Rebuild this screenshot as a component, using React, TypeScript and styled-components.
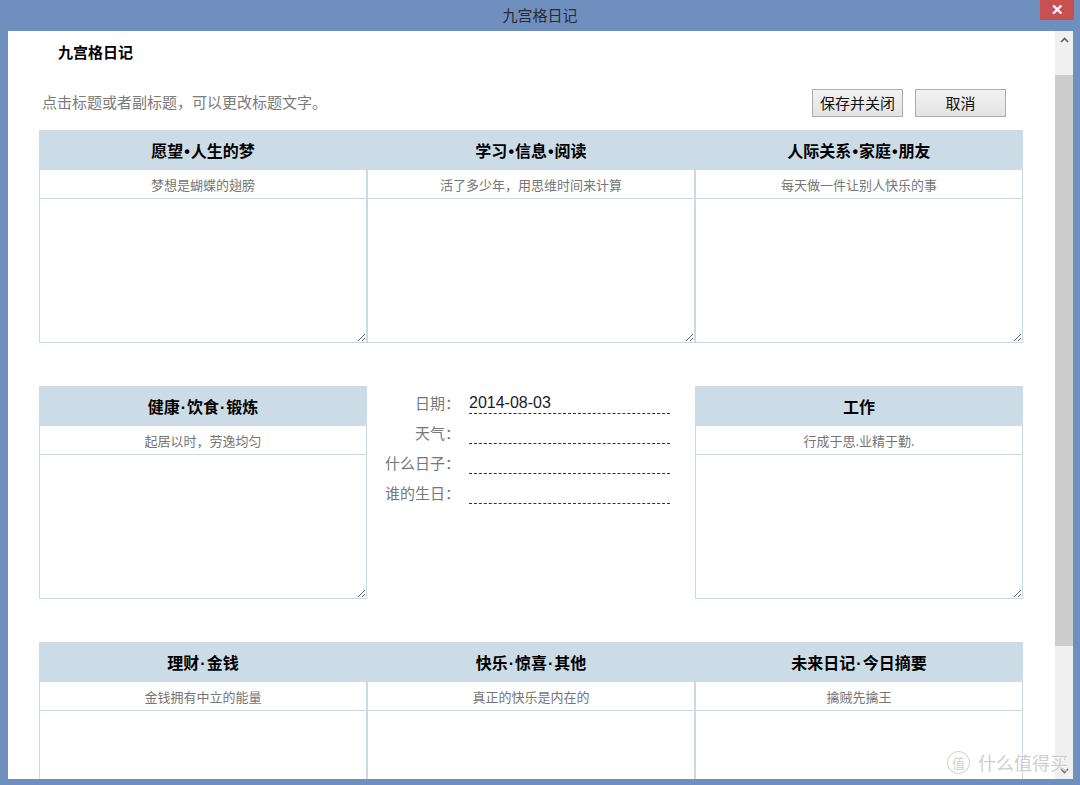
import React from "react";
import styled, { createGlobalStyle } from "styled-components";

const Global = createGlobalStyle`
  html, body { margin: 0; padding: 0; width: 1080px; height: 785px; overflow: hidden; }
  body { font-family: "Noto Sans CJK SC", "Liberation Sans", sans-serif; }
  #root { width: 1080px; height: 785px; }
`;

const FRAME = "#6f8fbf";
const HEAD_BG = "#ccdce7";
const LINE = "#c9dae7";
const CJK = `"Noto Sans CJK SC", "Liberation Sans", sans-serif`;

const Window = styled.div`
  width: 1080px;
  height: 785px;
  background: ${FRAME};
  display: flex;
  flex-direction: column;
  position: relative;
  overflow: hidden;
`;

const TitleBar = styled.div`
  height: 31px;
  flex: 0 0 31px;
  display: grid;
  grid-template-columns: 1fr auto 1fr;
  align-items: start;
`;

const TitleText = styled.div`
  grid-column: 2;
  font-family: ${CJK};
  font-size: 15px;
  line-height: 29px;
  color: #2b2b2b;
`;

const CloseButton = styled.div`
  grid-column: 3;
  justify-self: end;
  margin-right: 6px;
  width: 34px;
  height: 20px;
  background: #c75050;
  color: #fff;
  font-family: "Liberation Sans", sans-serif;
  font-weight: bold;
  font-size: 15px;
  line-height: 20px;
  text-align: center;
`;

const Body = styled.div`
  flex: 1;
  min-height: 0;
  display: flex;
  margin: 0 7px 6px 8px;
`;

const Content = styled.div`
  flex: 1;
  min-width: 0;
  background: #fff;
  overflow: hidden;
`;

const ScrollBar = styled.div`
  width: 18px;
  flex: 0 0 18px;
  background: #f0f0f0;
  display: flex;
  flex-direction: column;
`;

const ScrollArrow = styled.div`
  height: 17px;
  flex: 0 0 17px;
  display: flex;
  align-items: center;
  justify-content: center;
  color: #606060;
`;

const ScrollTrack = styled.div`
  flex: 1;
  padding: 27px 0 0 0;
`;

const ScrollThumb = styled.div`
  height: 571px;
  background: #cdcdcd;
`;

const Heading = styled.div`
  padding: 10px 0 0 50px;
  height: 22px;
  font-family: ${CJK};
  font-weight: bold;
  font-size: 15px;
  line-height: 22px;
  color: #000;
`;

const Toolbar = styled.div`
  margin-top: 26px;
  height: 28px;
  display: flex;
  align-items: center;
  padding: 0 49px 0 34px;
`;

const Hint = styled.div`
  flex: 1;
  padding-bottom: 3px;
  font-family: ${CJK};
  font-size: 15px;
  color: #7a7a7a;
`;

const Button = styled.button`
  width: 91px;
  height: 28px;
  margin-left: 12px;
  padding: 0;
  border: 1px solid #acacac;
  background: linear-gradient(#f2f2f2, #e3e3e3);
  font-family: ${CJK};
  font-size: 15px;
  color: #111;
  line-height: 26px;
`;

const Grid = styled.div`
  margin: 13px 0 0 31px;
  display: grid;
  grid-template-columns: repeat(3, 328px);
  grid-template-rows: 213px 213px 213px;
  row-gap: 43px;
`;

const Cell = styled.div`
  display: flex;
  flex-direction: column;
`;

const CellHeader = styled.div`
  height: 40px;
  flex: 0 0 40px;
  background: ${HEAD_BG};
  font-family: ${CJK};
  font-weight: bold;
  font-size: 16px;
  line-height: 40px;
  text-align: center;
  color: #000;
`;

const Sep = styled.span`
  font-family: "Liberation Sans", sans-serif;
  font-weight: bold;
  margin: 0 1px;
`;

const CellSub = styled.div`
  height: 28px;
  flex: 0 0 28px;
  border: 1px solid ${LINE};
  border-top: none;
  font-family: ${CJK};
  font-size: 13px;
  line-height: 29px;
  text-align: center;
  color: #757575;
`;

const CellText = styled.textarea`
  display: block;
  flex: 1;
  width: 100%;
  box-sizing: border-box;
  margin: 0;
  border: 1px solid ${LINE};
  border-top: none;
  outline: none;
  resize: vertical;
  font-family: ${CJK};
  font-size: 13px;
  background: #fff;
`;

const Form = styled.div`
  padding-top: 6px;
  display: flex;
  flex-direction: column;
  gap: 8px;
`;

const FormRow = styled.div`
  display: flex;
  height: 22px;
`;

const FormLabel = styled.div`
  width: 93px;
  text-align: right;
  font-family: ${CJK};
  font-size: 15px;
  line-height: 22px;
  color: #777;
`;

const FormValue = styled.div`
  margin-left: 9px;
  width: 201px;
  box-sizing: border-box;
  border-bottom: 1px dashed #333;
  font-family: "Liberation Sans", sans-serif;
  font-size: 16px;
  line-height: 21px;
  color: #1a1a2a;
`;

const Watermark = styled.div`
  position: absolute;
  right: 12px;
  bottom: 10px;
  display: flex;
  align-items: center;
  gap: 8px;
  color: rgba(200, 200, 200, 0.9);
  font-family: ${CJK};
  font-size: 18px;
  text-shadow: 0 0 2px #fff;
  pointer-events: none;
`;

const WmCircle = styled.div`
  width: 21px;
  height: 21px;
  border: 1px solid rgba(200, 200, 200, 0.9);
  border-radius: 50%;
  font-size: 13px;
  line-height: 21px;
  text-align: center;
`;

type Section = { title: string[]; sep: string; sub: string };

const rows: (Section | "form")[] = [
  { title: ["愿望", "人生的梦"], sep: "•", sub: "梦想是蝴蝶的翅膀" },
  { title: ["学习", "信息", "阅读"], sep: "•", sub: "活了多少年，用思维时间来计算" },
  { title: ["人际关系", "家庭", "朋友"], sep: "•", sub: "每天做一件让别人快乐的事" },
  { title: ["健康", "饮食", "锻炼"], sep: "·", sub: "起居以时，劳逸均匀" },
  "form",
  { title: ["工作"], sep: "·", sub: "行成于思.业精于勤." },
  { title: ["理财", "金钱"], sep: "·", sub: "金钱拥有中立的能量" },
  { title: ["快乐", "惊喜", "其他"], sep: "·", sub: "真正的快乐是内在的" },
  { title: ["未来日记", "今日摘要"], sep: "·", sub: "擒贼先擒王" },
];

const formRows = [
  { label: "日期：", value: "2014-08-03" },
  { label: "天气：", value: "" },
  { label: "什么日子：", value: "" },
  { label: "谁的生日：", value: "" },
];

const Chevron = ({ up }: { up: boolean }) => (
  <svg width="9" height="6" viewBox="0 0 9 6">
    <path
      d={up ? "M1 5 L4.5 1.5 L8 5" : "M1 1 L4.5 4.5 L8 1"}
      fill="none"
      stroke="currentColor"
      strokeWidth="1.6"
    />
  </svg>
);

export default function App() {
  return (
    <>
      <Global />
      <Window>
        <TitleBar>
          <TitleText>九宫格日记</TitleText>
          <CloseButton>✕</CloseButton>
        </TitleBar>
        <Body>
          <Content>
            <Heading>九宫格日记</Heading>
            <Toolbar>
              <Hint>点击标题或者副标题，可以更改标题文字。</Hint>
              <Button>保存并关闭</Button>
              <Button>取消</Button>
            </Toolbar>
            <Grid>
              {rows.map((r, i) =>
                r === "form" ? (
                  <Form key={i}>
                    {formRows.map((f) => (
                      <FormRow key={f.label}>
                        <FormLabel>{f.label}</FormLabel>
                        <FormValue>{f.value}</FormValue>
                      </FormRow>
                    ))}
                  </Form>
                ) : (
                  <Cell key={i}>
                    <CellHeader>
                      {r.title.map((part, j) => (
                        <React.Fragment key={j}>
                          {j > 0 && <Sep>{r.sep}</Sep>}
                          {part}
                        </React.Fragment>
                      ))}
                    </CellHeader>
                    <CellSub>{r.sub}</CellSub>
                    <CellText />
                  </Cell>
                )
              )}
            </Grid>
          </Content>
          <ScrollBar>
            <ScrollArrow>
              <Chevron up />
            </ScrollArrow>
            <ScrollTrack>
              <ScrollThumb />
            </ScrollTrack>
            <ScrollArrow>
              <Chevron up={false} />
            </ScrollArrow>
          </ScrollBar>
        </Body>
        <Watermark>
          <WmCircle>值</WmCircle>
          <span>什么值得买</span>
        </Watermark>
      </Window>
    </>
  );
}
